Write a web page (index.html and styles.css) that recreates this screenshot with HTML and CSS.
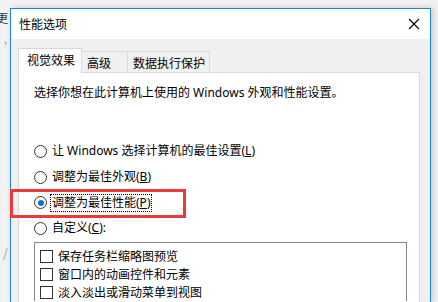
FILE: index.html
```html
<!DOCTYPE html>
<html lang="zh-CN">
<head>
<meta charset="utf-8">
<link rel="stylesheet" href="styles.css">
</head>
<body>
<div class="behind"><span class="frag f1">更</span><span class="frag f2">'</span><span class="frag f3">/</span></div>
<div class="window">
  <div class="titlebar">
    <span class="title">性能选项</span>
    <svg class="close" width="12" height="12" viewBox="0 0 12 12"><path d="M1 1 L11 11 M11 1 L1 11" stroke="#000" stroke-width="1.1" fill="none"/></svg>
  </div>
  <div class="body">
    <div class="tabs">
      <div class="tab active">视觉效果</div>
      <div class="tab t2">高级</div>
      <div class="tab t3">数据执行保护</div>
    </div>
    <div class="panel">
      <p class="desc">选择你想在此计算机上使用的 Windows 外观和性能设置。</p>
      <div class="options">
        <div class="opt"><span class="radio"></span><span class="lbl">让 Windows 选择计算机的最佳设置(<u>L</u>)</span></div>
        <div class="opt"><span class="radio"></span><span class="lbl">调整为最佳外观(<u>B</u>)</span></div>
        <div class="opt marked"><span class="radio on"></span><span class="lbl focus">调整为最佳性能(<u>P</u>)</span><span class="highlight"></span></div>
        <div class="opt"><span class="radio"></span><span class="lbl">自定义(<u>C</u>):</span></div>
      </div>
      <div class="list">
        <div class="item"><span class="check"></span><span>保存任务栏缩略图预览</span></div>
        <div class="item"><span class="check"></span><span>窗口内的动画控件和元素</span></div>
        <div class="item"><span class="check"></span><span>淡入淡出或滑动菜单到视图</span></div>
      </div>
    </div>
  </div>
</div>
</body>
</html>
```

FILE: styles.css
```css
html, body {
  margin: 0;
  padding: 0;
}
body {
  width: 438px;
  height: 302px;
  overflow: hidden;
  background: #f2f2f2;
  font-family: "Noto Sans", "Noto Sans CJK SC", sans-serif;
  font-size: 12px;
  color: #000;
  position: relative;
}
.behind {
  position: absolute;
  left: 0;
  top: 0;
  width: 10px;
  height: 302px;
  overflow: hidden;
}
.frag {
  position: absolute;
  font-family: "Noto Sans CJK SC", sans-serif;
  font-size: 12px;
  color: #333;
}
.f1 { left: -4px; top: 9px; }
.f2 { left: 4px; top: 38px; color: #999; }
.f3 { left: 3px; top: 244px; color: #999; }
.window {
  position: relative;
  margin: 8px 0 0 10px;
  width: 419px;
  height: 293px;
  border: 1px solid #1a85d8;
  border-bottom: none;
  background: #f0f0f0;
  box-shadow: 2px 0 6px rgba(0,0,0,0.18);
}
.titlebar {
  height: 30px;
  background: #fff;
  display: flex;
  align-items: center;
  justify-content: space-between;
  padding: 0 10px 0 8px;
}
.title {
  font-family: "Noto Sans CJK SC", sans-serif;
  font-size: 12px;
  line-height: 14px;
}
.close {
  display: block;
}
.body {
  padding: 9px 10px 0 7px;
}
.tabs {
  display: flex;
  align-items: flex-end;
  height: 24px;
  position: relative;
  z-index: 1;
}
.tab {
  height: 21px;
  box-sizing: border-box;
  border: 1px solid #d9d9d9;
  border-bottom: none;
  background: #f0f0f0;
  font-family: "Noto Sans CJK SC", sans-serif;
  line-height: 22px;
  padding: 0 0 0 5px;
  margin-left: -1px;
  white-space: nowrap;
}
.tab.active {
  height: 25px;
  margin-bottom: -1px;
  margin-left: 0;
  background: #fff;
  padding: 0 0 0 8px;
  line-height: 21px;
  width: 64px;
}
.tab.t2 { width: 47px; }
.tab.t3 { width: 83px; }
.panel {
  border: 1px solid #d9d9d9;
  border-bottom: none;
  background: #fff;
  height: 229px;
  padding: 0 0 0 15px;
}
.desc {
  margin: 10px 0 0;
  line-height: 20px;
  white-space: nowrap;
}
.options {
  margin-top: 35px;
}
.opt {
  height: 26px;
  display: flex;
  align-items: center;
  position: relative;
}
.opt.marked {
  height: 25px;
}
.radio {
  width: 11px;
  height: 11px;
  border: 1px solid #333;
  border-radius: 50%;
  margin-right: 3px;
  position: relative;
  flex: none;
}
.radio.on::after {
  content: "";
  position: absolute;
  left: 2.5px;
  top: 2.5px;
  width: 6px;
  height: 6px;
  border-radius: 50%;
  background: #0078d7;
}
.lbl {
  line-height: 16px;
  padding: 0 1px;
  border: 1px dotted transparent;
  white-space: nowrap;
}
.lbl u {
  text-decoration: underline;
  text-underline-offset: 1px;
}
.lbl.focus {
  border-color: #000;
}
.highlight {
  position: absolute;
  left: -24px;
  top: -1px;
  width: 170px;
  height: 23px;
  border: 3px solid #ec3a3a;
  pointer-events: none;
}
.list {
  margin-top: 1px;
  width: 371px;
  height: 54px;
  border: 1px solid #828790;
  border-bottom: none;
  padding-top: 4px;
  overflow: hidden;
}
.item {
  display: flex;
  align-items: center;
  height: 18px;
  padding-left: 5px;
  white-space: nowrap;
}
.check {
  width: 11px;
  height: 11px;
  border: 1px solid #333;
  margin-right: 5px;
  flex: none;
}
```
